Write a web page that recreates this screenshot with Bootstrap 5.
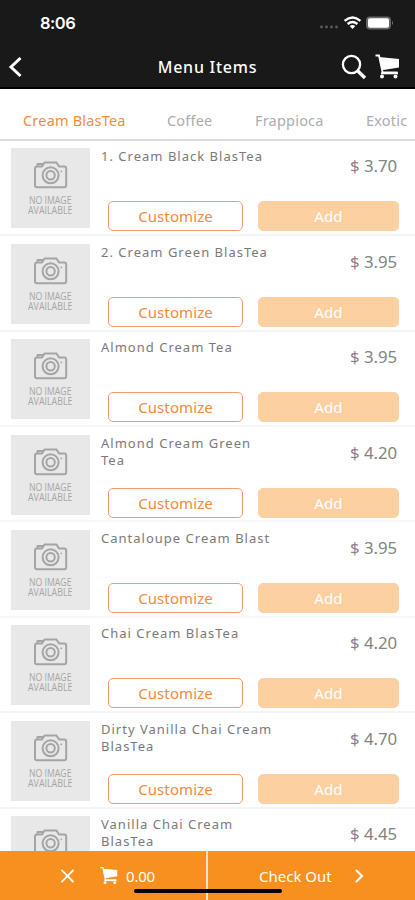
<!DOCTYPE html>
<html lang="en">
<head>
<meta charset="utf-8">
<meta name="viewport" content="width=device-width, initial-scale=1">
<title>Menu Items</title>
<link href="https://cdn.jsdelivr.net/npm/bootstrap@5.3.0/dist/css/bootstrap.min.css" rel="stylesheet">
<style>
body{font-family:"Noto Sans","Open Sans",sans-serif;background:#fff;color:#7a7a7a;height:900px;overflow:hidden}
svg{display:block;flex:none}
.app{height:900px}
.top-area{background:#191919;height:89px;color:#fff;border-bottom:2px solid #000;flex:none}
.status{height:46px;padding:0 21px 0 40px}
.clock{font:600 16.5px/20px "Inter",sans-serif;letter-spacing:-.5px}
.title-bar{height:41px;padding:0 15px 0 8px}
.page-title{font-size:16px;font-weight:500;letter-spacing:.75px;line-height:22px;padding:1px 0 0 12px}
.tabs{height:51.8px;border-bottom:2px solid #dcdcdc;font-size:14.5px;letter-spacing:.2px;color:#adadad;line-height:20px;padding:21px 0 0 23px;flex:none}
.tabs span{flex:none}
.tabs .on{color:#f68b3c;width:144px}
.tab-coffee{width:88px}
.tab-frap{width:111px}
.items{flex:1 1 0;min-height:0}
.item{height:95.43px;padding:7.5px 16px 0 11px;border-bottom:2px solid #f5f5f5}
.thumb{width:79px;height:80px;margin-right:11px}
.item-name{font-size:13px;line-height:17px;letter-spacing:1.01px;width:190px}
.price{font-size:16.8px;line-height:20px;margin:8px 2px 0 0;letter-spacing:-.05px;color:#848484}
.text-area{height:53px}
.act{height:30px;border-radius:5px;font-size:15px;line-height:28px;padding:0;letter-spacing:.1px}
.act-custom,.act-custom:hover{width:135px;margin-left:-1px;border:1px solid #f29b70;color:#f28a40;background:#fff}
.act-add,.act-add:hover{width:141px;background:#fdd0a2;color:#fff;border:1px solid #fdd0a2}
.foot{height:49.5px;background:#f7901e;color:#fff;font-size:15px;line-height:20px;flex:none}
.foot-left{width:208px;border-right:2px solid #fde3c6;padding:15px 0 0 61px}
.foot-right{padding:15px 0 0 51px}
.foot-cart{margin-left:26px}
.total{margin-left:8px;letter-spacing:-.2px}
.go{margin-left:22px}
.home-bar{width:148px;height:4px;border-radius:2px;background:#000;left:134px;top:38px}
</style>
<script src="https://cdn.jsdelivr.net/npm/bootstrap@5.3.0/dist/js/bootstrap.bundle.min.js"></script>
</head>
<body>
<svg width="0" height="0" class="position-absolute" aria-hidden="true">
<symbol id="cart" viewBox="0 0 25 25">
<path d="M.5 1.5H4L7.6 18.5H22.5" fill="none" stroke="currentColor" stroke-width="1.8"/>
<path d="M4 3L24 5V13.4L7 16.3Z" fill="currentColor"/>
<path d="M6 19.3H23" stroke="currentColor" stroke-width="2"/>
<circle cx="7" cy="22.6" r="2" fill="currentColor"/><circle cx="20.5" cy="22.6" r="2" fill="currentColor"/>
</symbol>
<symbol id="noimg" viewBox="0 0 79 80">
<rect width="79" height="80" fill="#e8e8e8"/>
<g fill="none" stroke="#a4a4a4" stroke-width="2" stroke-linejoin="round">
<path d="M31 18.5L33.5 14.5H45.5L48 18.5H53.2Q55.2 18.5 55.2 20.5V37.2Q55.2 39.2 53.2 39.2H26Q24 39.2 24 37.2V20.5Q24 18.5 26 18.5ZM26.5 18V16H32"/>
<circle cx="39.6" cy="27.3" r="8"/><circle cx="39.6" cy="27.3" r="4.2"/>
</g>
<circle cx="50.3" cy="23.3" r=".9" fill="#a4a4a4"/>
<g font-family="Open Sans, sans-serif" font-size="10.6" fill="#a6a6a6">
<text x="18" y="56" textLength="42.5" lengthAdjust="spacingAndGlyphs">NO IMAGE</text>
<text x="17" y="66" textLength="44.5" lengthAdjust="spacingAndGlyphs">AVAILABLE</text>
</g>
</symbol>
</svg>
<div class="app d-flex flex-column overflow-hidden">
<header class="top-area">
<div class="status d-flex align-items-center justify-content-between">
<span class="clock">8:06</span>
<svg width="76" height="18" viewBox="0 0 76 18">
<g fill="#5c5c5c"><circle cx="3.5" cy="13" r="1.4"/><circle cx="8.5" cy="13" r="1.4"/><circle cx="13.5" cy="13" r="1.4"/><circle cx="18.5" cy="13" r="1.4"/></g>
<g fill="none" stroke="#fff" stroke-width="2.3"><path d="M26.6 6.8Q34.5 .2 42.4 6.8"/><path d="M29.6 10Q34.5 6 39.4 10"/></g>
<path d="M31.7 12Q34.5 10 37.3 12L34.5 15Z" fill="#fff"/>
<rect x="48" y="2.5" width="25" height="13" rx="4" fill="#666"/><rect x="50" y="4.3" width="21" height="9.4" rx="2" fill="#fff"/><path d="M74 7Q76 9 74 11Z" fill="#777"/>
</svg>
</div>
<div class="title-bar d-flex align-items-center justify-content-between">
<svg width="54" height="22" viewBox="0 0 54 22"><path d="M12.5 2L3 11L12.5 20" fill="none" stroke="#fff" stroke-width="3"/></svg>
<span class="page-title">Menu Items</span>
<div class="d-flex align-items-center gap-2">
<svg width="26" height="26" viewBox="0 0 26 26"><circle cx="10.5" cy="10.5" r="8.6" fill="none" stroke="#fff" stroke-width="2.3"/><path d="M16.6 16.8L24 24" stroke="#fff" stroke-width="3.4"/></svg>
<svg width="25" height="25"><use href="#cart"/></svg>
</div>
</div>
</header>
<nav class="tabs d-flex text-nowrap">
<span class="on">Cream BlasTea</span><span class="tab-coffee">Coffee</span><span class="tab-frap">Frappioca</span><span>Exotic</span>
</nav>
<main class="items overflow-hidden" id="items"></main>
<footer class="foot d-flex position-relative">
<div class="foot-left d-flex">
<svg width="13" height="20" viewBox="0 0 13 20"><path d="M.5 4L12.5 16M12.5 4L.5 16" stroke="#fff" stroke-width="1.8"/></svg>
<svg class="foot-cart" width="18" height="19"><use href="#cart"/></svg>
<span class="total">0.00</span>
</div>
<div class="foot-right d-flex">
<span>Check Out</span>
<svg class="go" width="10" height="20" viewBox="0 0 10 20"><path d="M2 4L8 10L2 16" fill="none" stroke="#fff" stroke-width="2.2"/></svg>
</div>
<div class="home-bar position-absolute"></div>
</footer>
</div>
<script>
const rows=[["1. Cream Black BlasTea","3.70"],["2. Cream Green BlasTea","3.95"],["Almond Cream Tea","3.95"],["Almond Cream Green<br>Tea","4.20"],["Cantaloupe Cream Blast","3.95"],["Chai Cream BlasTea","4.20"],["Dirty Vanilla Chai Cream<br>BlasTea","4.70"],["Vanilla Chai Cream<br>BlasTea","4.45"]];
document.getElementById("items").innerHTML=rows.map(([n,p])=>`<div class="item d-flex">
<svg class="thumb" viewBox="0 0 79 80"><use href="#noimg"/></svg>
<div class="flex-grow-1"><div class="text-area d-flex justify-content-between"><div class="item-name text-nowrap">${n}</div><div class="price text-nowrap">$ ${p}</div></div>
<div class="d-flex justify-content-between ps-2"><button class="btn act act-custom">Customize</button><button class="btn act act-add">Add</button></div></div></div>`).join("");
</script>
</body>
</html>
